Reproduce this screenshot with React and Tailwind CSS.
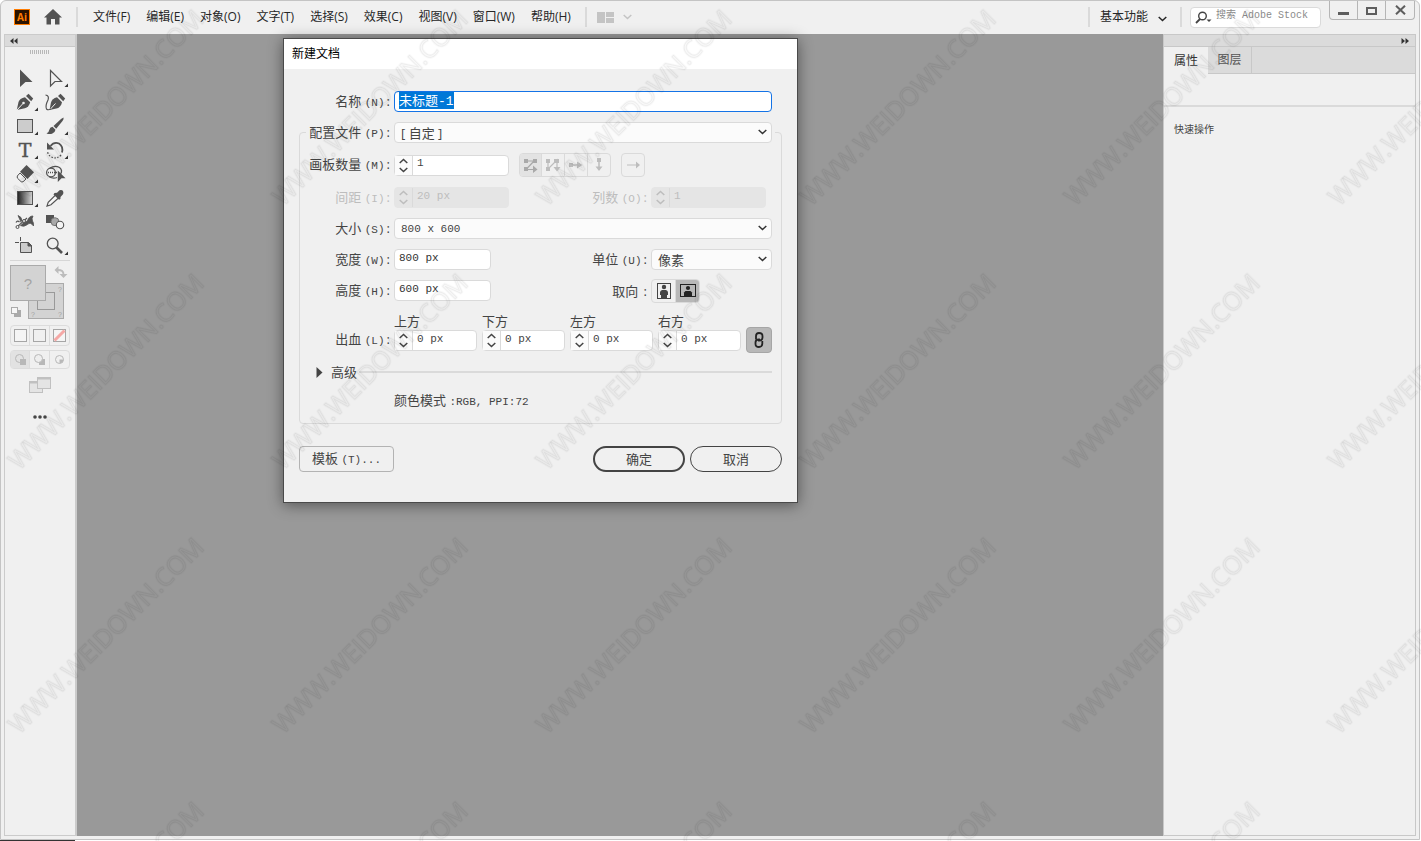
import React, { useState } from "react";

const menuItems = [
  "文件(F)",
  "编辑(E)",
  "对象(O)",
  "文字(T)",
  "选择(S)",
  "效果(C)",
  "视图(V)",
  "窗口(W)",
  "帮助(H)",
];

const Chevron = ({ className = "" }) => (
  <svg
    className={className}
    width="9"
    height="6"
    viewBox="0 0 9 6"
    fill="none"
    stroke="currentColor"
    strokeWidth="1.5"
  >
    <path d="M0.7 1 L4.5 4.5 L8.3 1" />
  </svg>
);

// every tool is drawn in a 30x24 cell
const tools = [
  {
    name: "选择工具",
    icon: <path d="M10 3.5 L22.5 16 H15.5 L10 21 Z" fill="#535353" />,
  },
  {
    name: "直接选择工具",
    more: true,
    icon: (
      <path
        d="M10.5 4.5 L21.5 15.5 H15 L10.5 20 Z"
        fill="none"
        stroke="#535353"
        strokeWidth="1.2"
      />
    ),
  },
  {
    name: "钢笔工具",
    more: true,
    icon: (
      <g>
        <path
          d="M6.8 20 L8.5 12 Q9.5 8.5 15 7.2 L20.2 12.2 Q19 17 14.8 18.2 Z"
          fill="#535353"
        />
        <path d="M16 6 L18.5 3.8 L23.2 8.5 L21.2 11.2 Z" fill="#535353" />
        <path d="M7 20 L13 13.5" stroke="#f0f0f0" strokeWidth="1" />
        <circle cx="13.5" cy="13" r="1.3" fill="#f0f0f0" />
      </g>
    ),
  },
  {
    name: "曲率工具",
    icon: (
      <g>
        <path
          d="M9.5 20 L11 12.5 Q12 8.5 17 7.2 L22 12.2 Q21 16.5 17.5 18.2 Z"
          fill="#535353"
        />
        <path d="M18 6 L20.5 3.8 L25.2 8.5 L23.2 11.2 Z" fill="#535353" />
        <path d="M10 19.5 L15.5 13.5" stroke="#f0f0f0" strokeWidth="1" />
        <path
          d="M5.5 5 Q9.5 5.5 8 10 Q5 16 6.5 19 Q8 20.5 11 19"
          fill="none"
          stroke="#535353"
          strokeWidth="1.2"
        />
      </g>
    ),
  },
  {
    name: "矩形工具",
    more: true,
    icon: (
      <rect
        x="7.5"
        y="5.5"
        width="15"
        height="13"
        fill="#cccccc"
        stroke="#535353"
      />
    ),
  },
  {
    name: "画笔工具",
    more: true,
    icon: (
      <g fill="#535353">
        <path d="M23.5 3.5 Q24 5 22.5 7 L16.2 14.8 L13.5 12 L21 5 Z" />
        <path d="M12.5 12.8 L15.5 15.8 Q15 19 12 19.8 Q9.5 20.5 6.5 19.6 Q9 18.5 9.2 16 Q9.8 13.2 12.5 12.8 Z" />
      </g>
    ),
  },
  {
    name: "文字工具",
    more: true,
    icon: (
      <text
        x="15"
        y="19"
        textAnchor="middle"
        fontSize="19"
        fontFamily="DejaVu Serif, serif"
        stroke="#535353"
        strokeWidth="0.5"
        fill="#535353"
      >
        T
      </text>
    ),
  },
  {
    name: "旋转工具",
    more: true,
    icon: (
      <g fill="none" stroke="#535353">
        <path
          d="M10.5 8 Q14 3.5 19 5.5 Q23.5 8.5 22 14.5"
          strokeWidth="1.8"
        />
        <path
          d="M21 17 Q17 21.5 11.5 19 Q8.5 17.5 7.5 14"
          strokeWidth="1.3"
          strokeDasharray="1.5 1.5"
        />
        <path d="M7 4.5 V11.5 H14 Z" fill="#535353" stroke="none" />
      </g>
    ),
  },
  {
    name: "橡皮擦工具",
    more: true,
    icon: (
      <g>
        <path d="M16.5 3 L24 10.2 L17.5 17 L10 9.8 Z" fill="#535353" />
        <path
          d="M10 11 L16 17 L13 19.8 H11.2 L7.3 16 V14 Z"
          fill="#f0f0f0"
          stroke="#535353"
        />
      </g>
    ),
  },
  {
    name: "形状生成器工具",
    icon: (
      <g fill="none" stroke="#535353" strokeWidth="1.3">
        <circle cx="11" cy="10.5" r="4.4" />
        <path d="M10 6 Q15 3 19.5 5.5 Q23 8.5 20.5 12" />
        <path d="M9 14.8 Q13 17 17 15.5" />
        <path d="M8 10.5 H18" strokeDasharray="1 1" />
        <path
          d="M17.8 8.5 L25.5 16.2 H21.5 L17.8 20 Z"
          fill="#535353"
          stroke="none"
        />
      </g>
    ),
  },
  {
    name: "渐变工具",
    more: true,
    icon: (
      <g>
        <linearGradient id="toolGradient">
          <stop offset="0" stopColor="#222222" />
          <stop offset="1" stopColor="#d8d8d8" />
        </linearGradient>
        <rect
          x="7.5"
          y="5.5"
          width="15"
          height="13"
          fill="url(#toolGradient)"
          stroke="#535353"
        />
      </g>
    ),
  },
  {
    name: "吸管工具",
    icon: (
      <g>
        <path
          d="M15.5 9 L18.5 12 L11 18.8 L7 20 L8.2 16.2 Z"
          fill="#f7f7f7"
          stroke="#535353"
          strokeWidth="1.2"
        />
        <path
          d="M14.5 7 L17 6.8 L19.5 4.2 Q22 3.5 23 5 Q24 7 22.8 8.5 L20.5 11 L20.4 13 L19 13.8 L13.5 8.4 Z"
          fill="#535353"
        />
      </g>
    ),
  },
  {
    name: "操控变形工具",
    icon: (
      <g fill="none" stroke="#535353">
        <path
          d="M8 5.5 Q11.5 6.5 12 10.5 Q14.5 14 17.5 10.5 Q19 6 23 6 Q21.5 8.5 22.5 11 Q24 13 23.5 16 Q20.5 11.5 17.5 14.5 Q14 17.5 10 15.5 Q12 13 10.500 11 Z"
          fill="#535353"
          strokeWidth="0.8"
        />
        <path d="M7 17 L17 8" stroke="#f0f0f0" strokeWidth="2.200" />
        <path d="M7 17 L17 8" strokeWidth="1.1" />
        <path d="M6 12.5 Q7.500 10 9.500 12" strokeWidth="1.2" />
        <circle cx="7.5" cy="17" r="1.5" fill="#f0f0f0" />
        <circle cx="14" cy="11" r="1.5" fill="#f0f0f0" />
      </g>
    ),
  },
  {
    name: "混合工具",
    icon: (
      <g>
        <rect x="6" y="5" width="8" height="8" fill="#535353" />
        <circle cx="15" cy="11.7" r="4" fill="#a9a9a9" stroke="#777777" />
        <circle
          cx="20"
          cy="15"
          r="3.7"
          fill="#f4f4f4"
          stroke="#535353"
          strokeWidth="1.1"
        />
      </g>
    ),
  },
  {
    name: "画板工具",
    icon: (
      <g fill="none" stroke="#535353">
        <path d="M5 8.5 H9 M10.5 3 V7" />
        <path d="M10.5 8.5 H18.5 L21.5 11.5 V18.5 H10.5 Z" fill="#cccccc" />
        <path d="M18 8.5 V12 H21.5 Z" fill="#535353" />
      </g>
    ),
  },
  {
    name: "缩放工具",
    more: true,
    icon: (
      <g fill="none" stroke="#535353">
        <circle cx="12.7" cy="9.5" r="5.4" strokeWidth="1.3" />
        <path d="M16.5 13.5 L22 19" strokeWidth="2.6" />
      </g>
    ),
  },
];

const Watermark = () => (
  <svg
    className="pointer-events-none absolute inset-0 z-50 h-full w-full"
    aria-hidden="true"
  >
    <pattern
      id="watermark"
      width="264"
      height="264"
      patternUnits="userSpaceOnUse"
    >
      <g
        transform="translate(19 207) rotate(-45)"
        fontFamily="Open Sans, sans-serif"
        fontSize="25"
        fill="none"
        stroke="#000000"
        strokeLinejoin="round"
      >
        <text strokeOpacity="0.025" strokeWidth="2.5">
          WWW.WEIDOWN.COM
        </text>
        <text strokeOpacity="0.05" strokeWidth="0.8">
          WWW.WEIDOWN.COM
        </text>
      </g>
    </pattern>
    <rect width="100%" height="100%" fill="url(#watermark)" />
  </svg>
);

const Divider = () => <div className="h-5 w-0.5 shrink-0 bg-[#dadada]" />;

const TopBar = () => (
  <header className="flex h-[33px] shrink-0 items-start text-xs text-[#262626]">
    <div className="flex h-8 flex-1 items-center">
      <div className="ml-[13px] flex h-4 w-4 items-center justify-center border border-[#ff7c00] bg-[#2b1300] font-['Open_Sans',sans-serif] text-[10px] leading-none font-bold text-[#ff7c00]">
        Ai
      </div>
      <button type="button" aria-label="主页" className="ml-3.5">
        <svg width="18" height="16" viewBox="0 0 18 16" fill="#535353">
          <path d="M9 0 L18 8.5 H15.5 V15.5 H11 V10 H7 V15.5 H2.5 V8.5 H0 Z" />
        </svg>
      </button>
      <div className="ml-3.5">
        <Divider />
      </div>
      <nav className="ml-[15px] flex gap-4">
        {menuItems.map((item) => (
          <button key={item} type="button" className="whitespace-nowrap">
            {item}
          </button>
        ))}
      </nav>
      <div className="ml-3.5">
        <Divider />
      </div>
      <button
        type="button"
        aria-label="排列文档"
        className="ml-2.5 flex items-center gap-2 text-[#c4c4c4]"
      >
        <svg width="18" height="11" viewBox="0 0 18 11" fill="currentColor">
          <path d="M0 0 H8 V11 H0 Z M9 0 H17 V5 H9 Z M9 6 H17 V11 H9 Z" />
        </svg>
        <Chevron />
      </button>
    </div>
    <div className="flex h-8 items-center">
      <Divider />
      <button type="button" className="ml-2.5 flex items-center gap-2.5">
        基本功能
        <Chevron className="mt-1" />
      </button>
      <div className="ml-[13px]">
        <Divider />
      </div>
      <label className="ml-2 flex h-[21px] w-[131px] items-center rounded-sm border border-[#dadada] bg-white pl-1">
        <svg
          className="shrink-0"
          width="17"
          height="13"
          viewBox="0 0 17 13"
          fill="none"
          stroke="#444444"
          strokeWidth="1.4"
        >
          <circle cx="7.5" cy="5" r="3.8" />
          <path d="M5 8 L1 12" strokeWidth="1.8" />
          <path d="M11.5 8.5 H16.5 L14 11 Z" fill="#444444" stroke="none" />
        </svg>
        <input
          type="text"
          aria-label="搜索"
          placeholder="搜索 Adobe Stock"
          className="ml-1 w-full min-w-0 pb-0.5 font-['Liberation_Mono','Noto_Sans_CJK_SC',monospace] text-[10px] outline-none placeholder:text-[#8a8a8a]"
        />
      </label>
    </div>
    <div className="mr-1 ml-2 flex h-[19px] rounded-b border border-t-0 border-[#b5b5b5] text-[#5e5e5e]">
      <button
        type="button"
        aria-label="最小化"
        className="flex w-7 items-center justify-center border-r border-[#b5b5b5]"
      >
        <svg width="11" height="11" viewBox="0 0 11 11" fill="currentColor">
          <rect x="0" y="7" width="11" height="3" />
        </svg>
      </button>
      <button
        type="button"
        aria-label="最大化"
        className="flex w-7 items-center justify-center border-r border-[#b5b5b5]"
      >
        <svg
          width="11"
          height="9"
          viewBox="0 0 11 9"
          fill="none"
          stroke="currentColor"
          strokeWidth="2"
        >
          <rect x="1" y="2" width="9" height="6" />
        </svg>
      </button>
      <button
        type="button"
        aria-label="关闭"
        className="flex w-7 items-center justify-center"
      >
        <svg
          width="11"
          height="10"
          viewBox="0 0 11 10"
          stroke="currentColor"
          strokeWidth="2"
        >
          <path d="M1 0.7 L10 9.3 M10 0.7 L1 9.3" />
        </svg>
      </button>
    </div>
  </header>
);

const Toolbar = () => (
  <aside className="flex w-[73px] shrink-0 flex-col border border-r-2 border-[#cbcbcb]">
    <button
      type="button"
      aria-label="折叠工具栏"
      className="flex h-3 items-center border-b border-[#c8c8c8] bg-[#dbdbdb] pl-[5px]"
    >
      <svg width="8" height="6" viewBox="0 0 8 6" fill="#333333">
        <path d="M3.5 0 V6 L0 3 Z M7.5 0 V6 L4 3 Z" />
      </svg>
    </button>
    <svg className="mx-auto mt-[3px]" width="20" height="4" viewBox="0 0 20 4">
      <path
        d="M0 2 H20"
        stroke="#b8b8b8"
        strokeWidth="4"
        strokeDasharray="1 1"
      />
    </svg>
    <div className="mt-3 grid grid-cols-2 px-[5px]">
      {tools.map((tool) => (
        <button key={tool.name} type="button" aria-label={tool.name}>
          <svg width="30" height="24" viewBox="0 0 30 24">
            {tool.icon}
            {tool.more && <path d="M28 17.5 V21 H24.5 Z" fill="#333333" />}
          </svg>
        </button>
      ))}
    </div>
    <div className="mx-[5px] mt-0.5 h-px bg-[#d6d6d6]" />
    <svg
      className="ml-[5px] mt-1"
      width="60"
      height="56"
      viewBox="0 0 60 56"
      fill="#d3d3d3"
      stroke="#aaaaaa"
      fontFamily="Liberation Sans, sans-serif"
    >
      <rect x="18.5" y="18.5" width="35" height="35" />
      <rect x="27.5" y="27.5" width="17" height="17" stroke="#999999" />
      <rect x="0.5" y="0.5" width="35" height="35" />
      <g fill="#a3a3a3" stroke="none" textAnchor="middle">
        <text x="18" y="24" fontSize="15">
          ?
        </text>
        <text x="50" y="27" fontSize="7">
          ?
        </text>
        <text x="50" y="52" fontSize="7">
          ?
        </text>
        <text x="23" y="52" fontSize="7">
          ?
        </text>
      </g>
      <path
        d="M47 5 Q54 4.5 53.5 10"
        fill="none"
        strokeWidth="2"
        stroke="#bcbcbc"
      />
      <path
        d="M48.5 1 V9 L44.5 5 Z M49.5 9 H57.5 L53.5 13 Z"
        fill="#bcbcbc"
        stroke="none"
      />
      <rect x="4.5" y="45.5" width="6" height="6" fill="#aaaaaa" />
      <rect x="1.5" y="42.5" width="6" height="6" fill="#f7f7f7" />
    </svg>
    <div className="mx-[5px] mt-1 grid h-[21px] grid-cols-3 divide-x divide-[#dcdcdc] rounded-sm border border-[#dcdcdc]">
      <button
        type="button"
        aria-label="颜色"
        className="flex items-center justify-center"
      >
        <span className="h-[13px] w-[13px] border border-[#a6a6a6] bg-[#f5f5f5]" />
      </button>
      <button
        type="button"
        aria-label="渐变"
        className="flex items-center justify-center"
      >
        <span className="h-[13px] w-[13px] border border-[#a6a6a6]" />
      </button>
      <button
        type="button"
        aria-label="无"
        className="flex items-center justify-center"
      >
        <svg width="13" height="13" viewBox="0 0 13 13">
          <rect
            x="0.5"
            y="0.5"
            width="12"
            height="12"
            fill="#f5f5f5"
            stroke="#a6a6a6"
          />
          <path d="M1.5 11.5 L11.5 1.5" stroke="#f5a8a6" strokeWidth="3" />
        </svg>
      </button>
    </div>
    <div className="mx-[5px] mt-1 grid h-[19px] grid-cols-3 divide-x divide-[#dcdcdc] rounded-sm border border-[#dcdcdc]">
      <button
        type="button"
        aria-label="正常绘图"
        className="flex items-center justify-center bg-[#e2e2e2]"
      >
        <svg width="11" height="11" viewBox="0 0 11 11">
          <circle cx="4.5" cy="4.5" r="4" fill="none" stroke="#b8b8b8" />
          <rect x="5" y="5" width="6" height="6" fill="#b8b8b8" />
        </svg>
      </button>
      <button
        type="button"
        aria-label="背面绘图"
        className="flex items-center justify-center"
      >
        <svg width="11" height="11" viewBox="0 0 11 11">
          <rect x="5" y="5" width="6" height="6" fill="#b8b8b8" />
          <circle cx="4.5" cy="4.5" r="4" fill="#eeeeee" stroke="#b8b8b8" />
        </svg>
      </button>
      <button
        type="button"
        aria-label="内部绘图"
        className="flex items-center justify-center"
      >
        <svg width="9" height="9" viewBox="0 0 9 9">
          <circle cx="4.5" cy="4.5" r="4" fill="none" stroke="#b8b8b8" />
          <path d="M4.5 4.5 H8.5 Q8 8 4.5 8.5 Z" fill="#b8b8b8" />
        </svg>
      </button>
    </div>
    <button type="button" aria-label="更改屏幕模式" className="mx-auto mt-2">
      <svg
        width="22"
        height="16"
        viewBox="0 0 22 16"
        fill="#e4e4e4"
        stroke="#c0c0c0"
      >
        <rect x="0.5" y="4.5" width="13" height="11" />
        <path d="M0 5.5 H14" strokeWidth="2" />
        <rect x="8.5" y="0.5" width="13" height="11" />
        <path d="M8 1.5 H22" strokeWidth="2" />
      </svg>
    </button>
    <button type="button" aria-label="编辑工具栏" className="mx-auto mt-[22px]">
      <svg width="14" height="4" viewBox="0 0 14 4" fill="#454545">
        <circle cx="2" cy="2" r="1.8" />
        <circle cx="7" cy="2" r="1.8" />
        <circle cx="12" cy="2" r="1.8" />
      </svg>
    </button>
  </aside>
);

const PropertiesPanel = () => (
  <aside className="mr-[3px] flex w-[253px] shrink-0 flex-col border border-[#c8c8c8]">
    <button
      type="button"
      aria-label="折叠面板"
      className="flex h-3 items-center justify-end border-b border-[#c8c8c8] bg-[#dbdbdb] pr-1.5"
    >
      <svg width="8" height="6" viewBox="0 0 8 6" fill="#333333">
        <path d="M0.5 0 V6 L4 3 Z M4.5 0 V6 L8 3 Z" />
      </svg>
    </button>
    <div className="flex h-[27px] bg-[#dbdbdb] text-xs">
      <button type="button" className="w-11 bg-[#f0f0f0] text-[#333333]">
        属性
      </button>
      <button
        type="button"
        className="w-11 border-r border-b border-[#c8c8c8] text-[#555555]"
      >
        图层
      </button>
      <div className="flex-1 border-b border-[#c8c8c8]" />
    </div>
    <div className="h-[33px] border-b-2 border-[#dadada]" />
    <h2 className="mt-3.5 ml-2.5 text-[10px] leading-4 text-[#444444]">
      快速操作
    </h2>
  </aside>
);

const FieldLabel = ({ htmlFor, text, hotkey, disabled }) => (
  <label
    htmlFor={htmlFor}
    className={`block w-[90px] shrink-0 text-right whitespace-nowrap ${
      disabled ? "text-[#bdbdbd]" : "text-[#444444]"
    }`}
  >
    {text}{" "}
    {hotkey && (
      <span className="font-['Liberation_Mono',monospace] text-[11px]">
        ({hotkey})
      </span>
    )}
    <span className="ml-0.5">:</span>
  </label>
);

const TextField = ({ id, defaultValue, className = "" }) => (
  <input
    id={id}
    type="text"
    defaultValue={defaultValue}
    className={`h-[21px] rounded-sm border border-[#dadada] bg-white px-1 pb-1 font-['Liberation_Mono',monospace] text-[11px] text-[#333333] outline-none ${className}`}
  />
);

const SelectField = ({ id, options, mono, className = "" }) => (
  <div className={`relative ${className}`}>
    <select
      id={id}
      className={`block h-[21px] w-full appearance-none rounded-sm border border-[#dadada] bg-[#fbfbfb] pr-5 pl-1.5 text-[#444444] ${
        mono
          ? "font-['Liberation_Mono',monospace] text-[11px]"
          : "text-[13px] leading-4"
      }`}
    >
      {options.map((option) => (
        <option key={option}>{option}</option>
      ))}
    </select>
    <Chevron className="pointer-events-none absolute top-[7px] right-[5px] text-[#333333]" />
  </div>
);

const NumberField = ({ id, initial, unit = "", disabled, className = "" }) => {
  const [value, setValue] = useState(initial);

  return (
    <div
      className={`flex h-[21px] rounded-sm border ${
        disabled
          ? "border-[#e5e5e5] bg-[#e5e5e5] text-[#bdbdbd]"
          : "border-[#dadada] bg-white text-[#444444]"
      } ${className}`}
    >
      <div
        className={`flex w-[18px] shrink-0 flex-col items-center justify-between border-r border-[#dadada] py-0.5 ${
          disabled ? "" : "bg-[#fbfbfb]"
        }`}
      >
        <button
          type="button"
          aria-label="增加"
          disabled={disabled}
          onClick={() => setValue(value + 1)}
        >
          <Chevron className="rotate-180" />
        </button>
        <button
          type="button"
          aria-label="减少"
          disabled={disabled}
          onClick={() => setValue(Math.max(0, value - 1))}
        >
          <Chevron />
        </button>
      </div>
      <input
        id={id}
        type="text"
        disabled={disabled}
        value={`${value}${unit}`}
        onChange={(e) => setValue(parseInt(e.target.value, 10) || 0)}
        className="w-full min-w-0 px-1 pb-1 font-['Liberation_Mono',monospace] text-[11px] outline-none"
      />
    </div>
  );
};

const ArtboardLayout = () => (
  <div className="ml-1.5 flex gap-2.5">
    <div className="flex h-6 divide-x divide-[#dadada] overflow-hidden rounded-sm border border-[#dadada] text-[#bdbdbd]">
      <button
        type="button"
        aria-label="按行设置网格"
        className="flex w-[22px] items-center justify-center bg-[#e3e3e3] text-[#a9a9a9]"
      >
        <svg width="14" height="15" viewBox="0 0 14 15" fill="currentColor">
          <path d="M0 1 H4 V5 H0 Z M9 1 H13 V5 H9 Z M0 9 H4 V13 H0 Z M9 7.5 L13.5 11.5 L9 15 Z" />
          <path
            d="M3 3 H10 L2 11.5 H10"
            fill="none"
            stroke="currentColor"
            strokeWidth="1.2"
          />
        </svg>
      </button>
      <button
        type="button"
        aria-label="按列设置网格"
        className="flex w-[23px] items-center justify-center"
      >
        <svg width="15" height="14" viewBox="0 0 15 14" fill="currentColor">
          <path d="M0 1 H4 V5 H0 Z M8 1 H13 V5 H8 Z M0 9 H4 V13 H0 Z M7.5 9 H14.5 L11 13.5 Z" />
          <path
            d="M2 3 V11 L11 2 V11"
            fill="none"
            stroke="currentColor"
            strokeWidth="1.2"
          />
        </svg>
      </button>
      <button
        type="button"
        aria-label="按行排列"
        className="flex w-[23px] items-center justify-center"
      >
        <svg width="14" height="8" viewBox="0 0 14 8" fill="currentColor">
          <path d="M0 2 H4 V6 H0 Z M8 0.5 L13.5 4 L8 7.5 Z" />
          <path d="M3 4 H10" stroke="currentColor" strokeWidth="1.5" />
        </svg>
      </button>
      <button
        type="button"
        aria-label="按列排列"
        className="flex w-[22px] items-center justify-center"
      >
        <svg width="8" height="14" viewBox="0 0 8 14" fill="currentColor">
          <path d="M2 0 H6 V4 H2 Z M0.5 8.5 H7.5 L4 13 Z" />
          <path d="M4 3 V10" stroke="currentColor" strokeWidth="1.5" />
        </svg>
      </button>
    </div>
    <button
      type="button"
      aria-label="更改为从右至左的版面"
      className="flex h-6 w-6 items-center justify-center rounded-sm border border-[#dadada] text-[#bdbdbd]"
    >
      <svg width="13" height="8" viewBox="0 0 13 8" fill="currentColor">
        <path d="M0 3.5 H9 V0.5 L13 4 L9 7.5 V4.5 H0 Z" />
      </svg>
    </button>
  </div>
);

const bleedFields = [
  { id: "bleed-top", label: "上方" },
  { id: "bleed-bottom", label: "下方" },
  { id: "bleed-left", label: "左方" },
  { id: "bleed-right", label: "右方" },
];

const NewDocumentDialog = () => (
  <div
    role="dialog"
    aria-labelledby="dialog-title"
    className="absolute top-1 left-[206px] z-10 w-[515px] border border-[#4a4a4a] bg-[#f0f0f0] pb-[30px] text-[13px] leading-5 shadow-[0_2px_14px_rgba(0,0,0,0.45)]"
  >
    <h1
      id="dialog-title"
      className="h-[30px] bg-white pl-2 text-xs leading-[30px] text-black"
    >
      新建文档
    </h1>

    <form className="px-[15px] pt-[22px]" onSubmit={(e) => e.preventDefault()}>
      <div className="flex h-[21px] items-center gap-1 pr-2.5 pl-px">
        <FieldLabel htmlFor="doc-name" text="名称" hotkey="N" />
        <input
          id="doc-name"
          type="text"
          autoFocus
          onFocus={(e) => e.target.select()}
          defaultValue="未标题-1"
          className="h-[21px] min-w-0 flex-1 rounded-sm border border-[#1473e6] bg-white px-1 pb-1 font-['Liberation_Mono','Noto_Sans_CJK_SC',monospace] text-[13px] leading-4 outline-none selection:bg-[#0078d7] selection:text-white"
        />
      </div>

      <div className="mt-5 rounded-sm border border-[#dadada] pb-[11px]">
        <div className="mx-1.5 -mt-[11px] flex h-[21px] items-center gap-1 bg-[#f0f0f0] pr-[3px]">
          <div className="-ml-1.5">
            <FieldLabel htmlFor="profile" text="配置文件" hotkey="P" />
          </div>
          <SelectField id="profile" options={["[ 自定 ]"]} className="flex-1" />
        </div>

        <div className="mt-2.5 flex h-6 items-center gap-1">
          <FieldLabel htmlFor="artboards" text="画板数量" hotkey="M" />
          <NumberField id="artboards" initial={1} className="w-[115px]" />
          <ArtboardLayout />
        </div>

        <div className="mt-2.5 flex h-[21px] items-center gap-1">
          <FieldLabel htmlFor="spacing" text="间距" hotkey="I" disabled />
          <NumberField
            id="spacing"
            initial={20}
            unit=" px"
            disabled
            className="w-[115px]"
          />
          <div className="ml-auto flex items-center gap-1 pr-[15px]">
            <FieldLabel htmlFor="columns" text="列数" hotkey="O" disabled />
            <NumberField
              id="columns"
              initial={1}
              disabled
              className="w-[115px]"
            />
          </div>
        </div>

        <div className="mt-2.5 flex h-[21px] items-center gap-1 pr-[9px]">
          <FieldLabel htmlFor="size" text="大小" hotkey="S" />
          <SelectField
            id="size"
            options={["800 x 600"]}
            mono
            className="flex-1"
          />
        </div>

        <div className="mt-2.5 flex h-[21px] items-center gap-1 pr-[9px]">
          <FieldLabel htmlFor="doc-width" text="宽度" hotkey="W" />
          <TextField
            id="doc-width"
            defaultValue="800 px"
            className="w-[97px]"
          />
          <div className="ml-auto flex items-center gap-1">
            <FieldLabel htmlFor="unit" text="单位" hotkey="U" />
            <SelectField id="unit" options={["像素"]} className="w-[121px]" />
          </div>
        </div>

        <div className="mt-2.5 flex h-[21px] items-center gap-1 pr-[9px]">
          <FieldLabel htmlFor="doc-height" text="高度" hotkey="H" />
          <TextField
            id="doc-height"
            defaultValue="600 px"
            className="w-[97px]"
          />
          <div className="ml-auto flex items-center gap-1">
            <FieldLabel text="取向" />
            <div className="w-[121px]">
              <div className="flex h-6 w-[49px] overflow-hidden rounded-sm border border-[#dadada]">
                <button
                  type="button"
                  aria-label="纵向"
                  className="flex flex-1 items-center justify-center border-r border-[#dadada]"
                >
                  <svg
                    width="14"
                    height="16"
                    viewBox="0 0 14 16"
                    fill="#444444"
                  >
                    <rect
                      x="0.5"
                      y="0.5"
                      width="13"
                      height="15"
                      fill="none"
                      stroke="#444444"
                    />
                    <circle cx="7" cy="4" r="2.2" />
                    <path d="M5 7 H9 Q11 7.5 11 9.5 V12 H10 V15 H4 V12 H3 V9.5 Q3 7.5 5 7 Z" />
                  </svg>
                </button>
                <button
                  type="button"
                  aria-label="横向"
                  className="flex flex-1 items-center justify-center bg-[#b8b8b8]"
                >
                  <svg
                    width="16"
                    height="14"
                    viewBox="0 0 16 14"
                    fill="#222222"
                  >
                    <rect
                      x="0.5"
                      y="0.5"
                      width="15"
                      height="12"
                      fill="none"
                      stroke="#222222"
                    />
                    <circle cx="8" cy="4" r="2.1" />
                    <path d="M5.5 7 H10.5 L12 8.5 V12 H4 V8.5 Z" />
                  </svg>
                </button>
              </div>
            </div>
          </div>
        </div>

        <div className="mt-2.5 flex items-end gap-1 pr-[9px]">
          <FieldLabel htmlFor="bleed-top" text="出血" hotkey="L" />
          <div className="flex gap-[5px]">
            {bleedFields.map((field) => (
              <div key={field.id} className="w-[83px]">
                <label
                  htmlFor={field.id}
                  className="block h-[19px] leading-5 text-[#444444]"
                >
                  {field.label}
                </label>
                <NumberField id={field.id} initial={0} unit=" px" />
              </div>
            ))}
          </div>
          <button
            type="button"
            aria-label="使所有出血设置相同"
            className="-mb-0.5 ml-auto flex h-[26px] w-[26px] items-center justify-center rounded-sm border border-[#a6a6a6] bg-[#b8b8b8]"
          >
            <svg
              width="10"
              height="16"
              viewBox="0 0 10 16"
              fill="none"
              stroke="#222222"
              strokeWidth="1.8"
            >
              <path d="M5 9.5 V7 M2 7.5 V4 Q2 1 5 1 Q8.5 1 8.5 4 V5.5 Q8.5 8 6 8.5" />
              <path d="M5 6.5 V9 M8.3 9 V12 Q8 15 5 15 Q1.5 15 1.5 12 V10.5 Q1.5 8 4 7.5" />
            </svg>
          </button>
        </div>

        <button
          type="button"
          className="mt-[11px] flex w-full items-center gap-2 pr-[9px] pl-4 text-[#444444]"
        >
          <svg width="7" height="11" viewBox="0 0 7 11" fill="currentColor">
            <path d="M0.5 0 L6.5 5.5 L0.5 11 Z" />
          </svg>
          高级
          <span className="-ml-1.5 h-0.5 flex-1 bg-[#dadada]" />
        </button>

        <p className="mt-2 pl-[94px] text-[#444444]">
          颜色模式{" "}
          <span className="font-['Liberation_Mono',monospace] text-[11px]">
            :RGB, PPI:72
          </span>
        </p>
      </div>

      <div className="mt-[22px] flex h-[26px] gap-[5px] text-[#444444]">
        <button
          type="button"
          className="mr-auto w-[95px] rounded-sm border border-[#b3b3b3]"
        >
          模板{" "}
          <span className="font-['Liberation_Mono',monospace] text-[11px]">
            (T)...
          </span>
        </button>
        <button
          type="submit"
          className="w-[92px] rounded-full border-2 border-[#444444]"
        >
          确定
        </button>
        <button
          type="button"
          className="w-[92px] rounded-full border border-[#444444]"
        >
          取消
        </button>
      </div>
    </form>
  </div>
);

const App = () => {
  return (
    <div className="relative flex h-screen flex-col overflow-hidden bg-white pr-px font-['Open_Sans','Noto_Sans_CJK_SC',sans-serif]">
      <div className="flex min-h-0 flex-1 flex-col rounded-t-md border border-[#c4c4c4] bg-[#f0f0f0]">
        <TopBar />
        <div className="flex min-h-0 flex-1 pb-[3px] pl-[3px]">
          <Toolbar />
          <main className="relative min-w-0 flex-1 bg-[#999999]">
            <NewDocumentDialog />
          </main>
          <PropertiesPanel />
        </div>
      </div>
      <div className="h-px w-[75px] shrink-0 bg-[#333333]" />
      <Watermark />
    </div>
  );
};

export default App;
